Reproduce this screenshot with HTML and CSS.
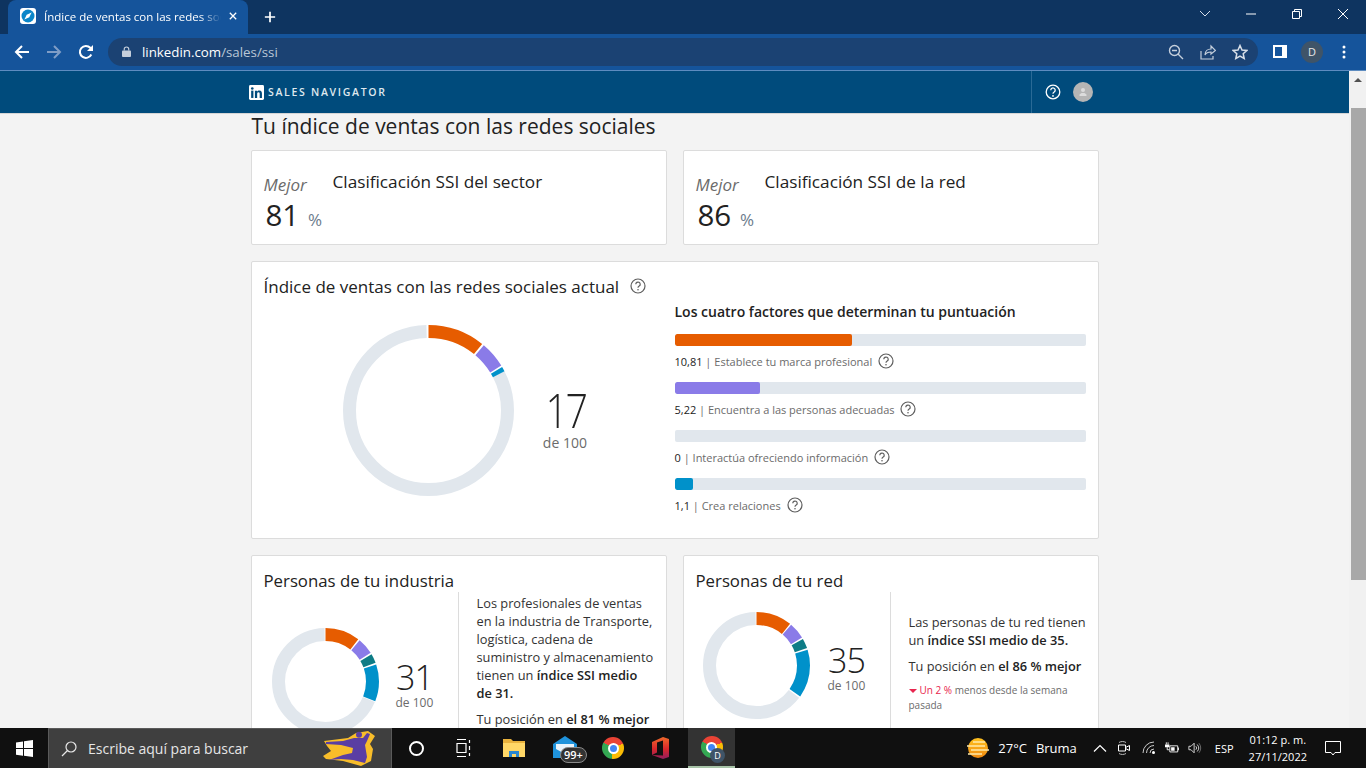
FILE: index.html
```html
<!DOCTYPE html>
<html lang="es">
<head>
    <meta charset="UTF-8">
    <meta name="viewport" content="width=device-width, initial-scale=1.0">
    <title>Índice de ventas con las redes sociales</title>
    <link rel="stylesheet" href="styles.css">
</head>
<body>
    <!-- Browser tabs -->
    <div class="tabstrip">
        <div class="tab">
            <svg class="favicon" viewBox="0 0 16 16">
                <rect width="16" height="16" rx="3" fill="#fff"/>
                <circle cx="8" cy="8" r="6.5" fill="#0a86c9"/>
                <path d="M11.6 4.4 9.3 9.3 4.4 11.6 6.7 6.7Z" fill="#fff"/>
            </svg>
            <span class="tab-title">Índice de ventas con las redes sociales</span>
            <svg class="tab-close" viewBox="0 0 10 10"><path d="M1 1l8 8M9 1l-8 8" stroke="#fff" stroke-width="1.6"/></svg>
        </div>
        <svg class="new-tab" viewBox="0 0 14 14"><path d="M7 1v12M1 7h12" stroke="#fff" stroke-width="2"/></svg>
        <div class="window-controls">
            <svg viewBox="0 0 46 14"><path d="M18 4l5 5 5-5" fill="none" stroke="#d5deea" stroke-width="1"/></svg>
            <svg viewBox="0 0 46 14"><path d="M18 7h10" stroke="#fff" stroke-width="1"/></svg>
            <svg viewBox="0 0 46 14"><path d="M18.500 4.500h7v7h-7zM20.500 4.500v-2h7v7h-2" fill="none" stroke="#fff" stroke-width="1"/></svg>
            <svg viewBox="0 0 46 14"><path d="M18 2l10 10M28 2l-10 10" stroke="#fff" stroke-width="1"/></svg>
        </div>
    </div>

    <!-- Address bar -->
    <div class="toolbar">
        <svg class="tool-icon" viewBox="0 0 16 16"><path d="M15 8H2M8 2 2 8l6 6" fill="none" stroke="#fff" stroke-width="2"/></svg>
        <svg class="tool-icon" viewBox="0 0 16 16"><path d="M1 8h13M8 2l6 6-6 6" fill="none" stroke="#7f9dc6" stroke-width="2"/></svg>
        <svg class="tool-icon" viewBox="0 0 16 16"><path d="M13.300 10.500A6 6 0 1 1 12.300 3.800L14 5.500" fill="none" stroke="#fff" stroke-width="2"/><path d="M15 1v6H9z" fill="#fff"/></svg>
        <div class="omnibox">
            <svg class="lock" viewBox="0 0 10 12"><path d="M2.500 5V3.500a2.500 2.500 0 0 1 5 0V5" fill="none" stroke="#c5cfdc" stroke-width="1.300"/><rect y="5" width="10" height="7" rx="1" fill="#c5cfdc"/></svg>
            <span class="url">linkedin.com<span class="url-path">/sales/ssi</span></span>
            <div class="omnibox-actions">
                <svg viewBox="0 0 16 16"><circle cx="6.500" cy="6.500" r="5" fill="none" stroke="#c5cfdc" stroke-width="1.400"/><path d="M4 6.500h5M10 10l5 5" stroke="#c5cfdc" stroke-width="1.400"/></svg>
                <svg viewBox="0 0 16 16"><path d="M1 7v8h12v-3M5 11c0-4 3-6 6-6V2l4.500 4.500L11 10V8c-3 0-5 1-6 3z" fill="none" stroke="#c5cfdc" stroke-width="1.200"/></svg>
                <svg viewBox="0 0 16 16"><path d="M8 1.500l2 4.500 4.800.5-3.600 3.200 1 4.800L8 12l-4.200 2.500 1-4.800L1.200 6.500 6 6z" fill="none" stroke="#d8dfe8" stroke-width="1.500"/></svg>
            </div>
        </div>
        <div class="profile-tools">
            <svg class="side-panel" viewBox="0 0 14 13"><path d="M0 0h14v13H0z" fill="#fff"/><path d="M2 2h7v9H2z" fill="#15549b"/></svg>
            <span class="profile-badge">D</span>
            <svg class="kebab" viewBox="0 0 4 14"><circle cx="2" cy="2" r="1.500" fill="#fff"/><circle cx="2" cy="7" r="1.500" fill="#fff"/><circle cx="2" cy="12" r="1.500" fill="#fff"/></svg>
        </div>
    </div>

    <!-- Page in the browser -->
    <div class="viewport">
        <div class="page">
            <header class="navbar">
                <svg class="li-logo" viewBox="0 0 16 16">
                    <rect width="16" height="16" rx="1.500" fill="#fff"/>
                    <rect x="2.300" y="6" width="2.400" height="7.800" fill="#004b7c"/>
                    <circle cx="3.500" cy="3.700" r="1.400" fill="#004b7c"/>
                    <path d="M6.300 6h2.300v1.100c.4-.7 1.200-1.300 2.400-1.300 2.300 0 2.800 1.500 2.800 3.500v4.500h-2.400v-4c0-1 0-2-1.300-2s-1.400 1-1.400 2v4H6.300z" fill="#004b7c"/>
                </svg>
                <span class="brand">SALES NAVIGATOR</span>
                <div class="navbar-right">
                    <svg class="nav-help" viewBox="0 0 16 16">
                        <circle cx="8" cy="8" r="6.800" fill="none" stroke="#fff" stroke-width="1.300"/>
                        <path d="M5.800 6.200a2.200 2.200 0 1 1 3.400 1.800c-.8.500-1.200 1-1.200 1.800" fill="none" stroke="#fff" stroke-width="1.300"/>
                        <circle cx="8" cy="11.900" r=".9" fill="#fff"/>
                    </svg>
                    <span class="nav-avatar">
                        <svg viewBox="0 0 10 10"><circle cx="5" cy="3" r="2" fill="#dcdcdc"/><path d="M1.500 9V7.500L3.500 6h3l2 1.500V9z" fill="#dcdcdc"/></svg>
                    </span>
                </div>
            </header>

            <main class="content">
                <h1 class="page-title">Tu índice de ventas con las redes sociales</h1>

                <div class="two-cols">
                    <section class="card rank-card">
                        <div class="rank-value">
                            <em>Mejor</em>
                            <div class="rank-number">81 <span>%</span></div>
                        </div>
                        <h2>Clasificación SSI del sector</h2>
                    </section>
                    <section class="card rank-card">
                        <div class="rank-value">
                            <em>Mejor</em>
                            <div class="rank-number">86 <span>%</span></div>
                        </div>
                        <h2>Clasificación SSI de la red</h2>
                    </section>
                </div>

                <section class="card score-card">
                    <div class="score-left">
                        <h2 class="card-title">Índice de ventas con las redes sociales actual
                            <svg class="help" viewBox="0 0 16 16"><use href="#q"/></svg>
                        </h2>
                        <div class="score-chart">
                            <svg class="donut-big" viewBox="0 0 171 171">
                                <g transform="rotate(-90 85.500 85.500)" fill="none" stroke-width="13">
                                    <circle cx="85.500" cy="85.500" r="79" pathLength="100" stroke="#e1e7ed" stroke-dasharray="82.300 100" stroke-dashoffset="-17.300"/>
                                    <circle cx="85.500" cy="85.500" r="79" pathLength="100" stroke="#e65c00" stroke-dasharray="10.800 100"/>
                                    <circle cx="85.500" cy="85.500" r="79" pathLength="100" stroke="#8a7be8" stroke-dasharray="5 100" stroke-dashoffset="-11.200"/>
                                    <circle cx="85.500" cy="85.500" r="79" pathLength="100" stroke="#0091ca" stroke-dasharray="0.900 100" stroke-dashoffset="-16.500"/>
                                </g>
                            </svg>
                            <div class="score big">
                                <strong>17</strong>
                                <span>de 100</span>
                            </div>
                        </div>
                    </div>
                    <div class="factors">
                        <h3>Los cuatro factores que determinan tu puntuación</h3>
                        <div class="factor">
                            <div class="bar"><div class="bar-fill orange" style="width: 43.1%"></div></div>
                            <p><b>10,81</b> | Establece tu marca profesional <svg class="help" viewBox="0 0 16 16"><use href="#q"/></svg></p>
                        </div>
                        <div class="factor">
                            <div class="bar"><div class="bar-fill purple" style="width: 20.7%"></div></div>
                            <p><b>5,22</b> | Encuentra a las personas adecuadas <svg class="help" viewBox="0 0 16 16"><use href="#q"/></svg></p>
                        </div>
                        <div class="factor">
                            <div class="bar"></div>
                            <p><b>0</b> | Interactúa ofreciendo información <svg class="help" viewBox="0 0 16 16"><use href="#q"/></svg></p>
                        </div>
                        <div class="factor">
                            <div class="bar"><div class="bar-fill blue" style="width: 4.4%"></div></div>
                            <p><b>1,1</b> | Crea relaciones <svg class="help" viewBox="0 0 16 16"><use href="#q"/></svg></p>
                        </div>
                    </div>
                </section>

                <div class="two-cols">
                    <section class="card peers-card">
                        <h2 class="card-title">Personas de tu industria</h2>
                        <div class="peers-body">
                            <div class="peers-chart industry">
                                <svg class="donut-small" viewBox="0 0 107 107">
                                    <g transform="rotate(-90 53.500 53.500)" fill="none" stroke-width="13">
                                        <circle cx="53.500" cy="53.500" r="47" pathLength="100" stroke="#e1e7ed" stroke-dasharray="68.400 100" stroke-dashoffset="-31.300"/>
                                        <circle cx="53.500" cy="53.500" r="47" pathLength="100" stroke="#e65c00" stroke-dasharray="10.500 100"/>
                                        <circle cx="53.500" cy="53.500" r="47" pathLength="100" stroke="#8a7be8" stroke-dasharray="5 100" stroke-dashoffset="-11"/>
                                        <circle cx="53.500" cy="53.500" r="47" pathLength="100" stroke="#0e7c86" stroke-dasharray="2.800 100" stroke-dashoffset="-16.500"/>
                                        <circle cx="53.500" cy="53.500" r="47" pathLength="100" stroke="#0091ca" stroke-dasharray="11.200 100" stroke-dashoffset="-19.800"/>
                                    </g>
                                </svg>
                                <div class="score">
                                    <strong>31</strong>
                                    <span>de 100</span>
                                </div>
                            </div>
                            <div class="peers-text">
                                <p>Los profesionales de ventas en la industria de Transporte, logística, cadena de suministro y almacenamiento tienen un <b>índice SSI medio de&nbsp;31.</b></p>
                                <p>Tu posición en <b>el 81 % mejor</b></p>
                            </div>
                        </div>
                    </section>
                    <section class="card peers-card">
                        <h2 class="card-title">Personas de tu red</h2>
                        <div class="peers-body">
                            <div class="peers-chart network">
                                <svg class="donut-small" viewBox="0 0 107 107">
                                    <g transform="rotate(-90 53.500 53.500)" fill="none" stroke-width="13">
                                        <circle cx="53.500" cy="53.500" r="47" pathLength="100" stroke="#e1e7ed" stroke-dasharray="64.400 100" stroke-dashoffset="-35.300"/>
                                        <circle cx="53.500" cy="53.500" r="47" pathLength="100" stroke="#e65c00" stroke-dasharray="10.800 100"/>
                                        <circle cx="53.500" cy="53.500" r="47" pathLength="100" stroke="#8a7be8" stroke-dasharray="5 100" stroke-dashoffset="-11.200"/>
                                        <circle cx="53.500" cy="53.500" r="47" pathLength="100" stroke="#0e7c86" stroke-dasharray="3 100" stroke-dashoffset="-16.700"/>
                                        <circle cx="53.500" cy="53.500" r="47" pathLength="100" stroke="#0091ca" stroke-dasharray="14.600 100" stroke-dashoffset="-20.200"/>
                                    </g>
                                </svg>
                                <div class="score">
                                    <strong>35</strong>
                                    <span>de 100</span>
                                </div>
                            </div>
                            <div class="peers-text network-text">
                                <p>Las personas de tu red tienen un <b>índice SSI medio de 35.</b></p>
                                <p>Tu posición en <b>el 86 % mejor</b></p>
                                <p class="trend"><i class="trend-arrow"></i><span>Un 2 %</span> menos desde la semana pasada</p>
                            </div>
                        </div>
                    </section>
                </div>
            </main>
        </div>

        <div class="scrollbar">
            <i class="scroll-up"></i>
            <div class="scroll-thumb"></div>
        </div>
    </div>

    <!-- Windows taskbar -->
    <footer class="taskbar">
        <div class="start">
            <svg viewBox="0 0 17 17"><path d="M0 2.400 7 1.400v6.700H0zM8 1.300 17 0v8.100H8zM0 9h7v6.700L0 14.700zM8 9h9v8L8 15.800z" fill="#fff"/></svg>
        </div>
        <div class="search">
            <svg class="search-icon" viewBox="0 0 16 16"><circle cx="10" cy="6" r="5" fill="none" stroke="#e8e8e8" stroke-width="1.200"/><path d="M6.500 9.500 1 15" stroke="#e8e8e8" stroke-width="1.200"/></svg>
            <span>Escribe aquí para buscar</span>
            <svg class="doodle" viewBox="0 0 52 35">
                <path d="M1 10 25 7 33 2 45 0 52 5 47 13 50 18 48 30 38 35 20 30 3 28 0 25 8 20 4 15Z" fill="#f8bd2a"/>
                <path d="M31 7 40 7 44 2 47 3 44 10 42 14 44 26 42 32 30 29 18 28 6 29 20 24 29 22 30 17 18 14 3 13 3 11 20 10Z" fill="#5a3ea3"/>
                <circle cx="36" cy="3.800" r="3" fill="#5a3ea3"/>
            </svg>
        </div>
        <div class="task-apps">
            <span class="app"><i class="cortana"></i></span>
            <span class="app">
                <svg class="task-view" viewBox="0 0 18 18"><path d="M3 .5h9M3 17.500h9M3 4.500h9v9H3zM15.500 1v3M15.500 7v4M15.500 14v3" fill="none" stroke="#fff" stroke-width="1.200"/></svg>
            </span>
            <span class="app">
                <svg class="folder" viewBox="0 0 22 20"><path d="M0 1h8l2 2h12v15H0z" fill="#e9b23d"/><path d="M0 5h22v14H0z" fill="#ffd767"/><path d="M6 19v-6h10v6z" fill="#2a87d0"/><path d="M9 19v-3h4v3z" fill="#ffd767"/></svg>
            </span>
            <span class="app mail">
                <svg viewBox="0 0 24 24"><path d="M0 8 12 0l12 8v14H0z" fill="#1f93dc"/><path d="M3 8h18v5l-9 5-9-5z" fill="#e8f4fc"/></svg>
                <b class="mail-badge">99+</b>
            </span>
            <span class="app"><i class="chrome"><i></i></i></span>
            <span class="app">
                <svg class="office" viewBox="0 0 17 22">
                    <defs>
                        <linearGradient id="officeFill" x1="0" y1="0" x2="0" y2="1">
                            <stop offset="0" stop-color="#f0692a"/>
                            <stop offset=".55" stop-color="#d8262c"/>
                            <stop offset="1" stop-color="#8f1d5e"/>
                        </linearGradient>
                    </defs>
                    <path d="M11 0 17 2V20L11 22 0 18V5Z" fill="url(#officeFill)"/>
                    <path d="M11 3.500 5 5.500V15.500L0 18 11 18.500Z" fill="#101010"/>
                </svg>
            </span>
            <span class="app active">
                <i class="chrome"><i></i></i>
                <b class="chrome-badge">D</b>
            </span>
        </div>
        <div class="tray">
            <svg class="sun" viewBox="0 0 24 20">
                <defs>
                    <linearGradient id="sunFill" x1="0" y1="0" x2="0" y2="1">
                        <stop offset="0" stop-color="#ffc11f"/>
                        <stop offset="1" stop-color="#f08a12"/>
                    </linearGradient>
                </defs>
                <circle cx="12" cy="10" r="10" fill="url(#sunFill)"/>
                <path d="M7 4h12M1 8h18M5 12h18M2 16h14" stroke="#ffe9a8" stroke-width="1.300"/>
            </svg>
            <span class="weather">27°C</span>
            <span class="weather weather-name">Bruma</span>
            <svg class="tray-icon caret" viewBox="0 0 14 16"><path d="M1 11.500 7 5.500l6 6" fill="none" stroke="#fff" stroke-width="1.200"/></svg>
            <svg class="tray-icon meet" viewBox="0 0 14 16"><path d="M1.500 5h7v6h-7zM8.500 7.500l4-2v5l-4-2" fill="none" stroke="#fff" stroke-width="1"/><path d="M2 2.500c2-1.300 5-1.300 7 0M2 13.500c2 1.300 5 1.300 7 0" fill="none" stroke="#bbb" stroke-width="1"/></svg>
            <svg class="tray-icon wifi" viewBox="0 0 14 16"><path d="M12 9a4 4 0 0 0-4 4M12 5.500a7.500 7.500 0 0 0-7.500 7.500M12 2A11 11 0 0 0 1 13" fill="none" stroke="#c9c9c9" stroke-width="1"/><circle cx="11.500" cy="12.500" r="1.500" fill="#fff"/></svg>
            <svg class="tray-icon power" viewBox="0 0 16 16"><path d="M5.500 5.500h9v7h-9z" fill="none" stroke="#fff" stroke-width="1"/><path d="M7 7h4v4H7zM15 7.500h1v3h-1zM0 4h5v3H0z" fill="#fff"/><path d="M1.500 1.500V4M3.500 1.500V4M2.500 7v3H5" fill="none" stroke="#fff" stroke-width="1"/></svg>
            <svg class="tray-icon volume" viewBox="0 0 16 16"><path d="M1 6h2.500l3.500-3.500v11L3.500 10H1z" fill="none" stroke="#e6e6e6" stroke-width="1"/><path d="M9 6a3 3 0 0 1 0 4M10.500 4a6 6 0 0 1 0 8" fill="none" stroke="#e6e6e6" stroke-width="1"/><path d="M12.500 2.500a8.500 8.500 0 0 1 0 11" fill="none" stroke="#777" stroke-width="1"/></svg>
            <span class="lang">ESP</span>
            <span class="clock">01:12 p. m.<br>27/11/2022</span>
            <svg class="notify" viewBox="0 0 16 15"><path d="M.5.500h15v11H10L8 14 6 11.500H.5z" fill="none" stroke="#fff" stroke-width="1"/></svg>
        </div>
    </footer>

    <!-- Shared question mark icon -->
    <svg class="defs" width="0" height="0">
        <symbol id="q" viewBox="0 0 16 16">
            <circle cx="8" cy="8" r="7" fill="none" stroke="#5e5e5e" stroke-width="1.200"/>
            <path d="M5.800 6.300a2.200 2.200 0 1 1 3.400 1.800c-.8.500-1.200 1-1.200 1.700" fill="none" stroke="#5e5e5e" stroke-width="1.200"/>
            <circle cx="8" cy="11.800" r=".8" fill="#5e5e5e"/>
        </symbol>
    </svg>
</body>
</html>
```

FILE: styles.css
```css
* {
    box-sizing: border-box;
}

html, body {
    height: 100%;
}

body {
    margin: 0;
    width: 1366px;
    height: 768px;
    overflow: hidden;
    display: flex;
    flex-direction: column;
    font-family: "Open Sans", "Noto Sans", Arial, sans-serif;
    color: #222;
    background: #f3f3f3;
}

h1, h2, h3, p {
    margin: 0;
    font-weight: 400;
}

.defs {
    position: absolute;
}

/* Browser tabs */
.tabstrip {
    flex: 0 0 34px;
    display: flex;
    align-items: flex-end;
    padding-left: 8px;
    background: #0e3460;
}

.tab {
    width: 240px;
    height: 34px;
    display: flex;
    align-items: center;
    padding: 0 11px 2px 12px;
    background: #15549b;
    border-radius: 8px 8px 0 0;
}

.favicon {
    width: 16px;
    height: 16px;
    flex: none;
}

.tab-title {
    flex: 1;
    margin-left: 8px;
    overflow: hidden;
    white-space: nowrap;
    font-size: 11.5px;
    color: #fff;
    -webkit-mask-image: linear-gradient(90deg, #000 88%, transparent);
    mask-image: linear-gradient(90deg, #000 88%, transparent);
}

.tab-close {
    width: 8px;
    height: 8px;
    margin-left: 8px;
    flex: none;
}

.new-tab {
    width: 12px;
    height: 12px;
    margin: 0 0 11px 16px;
}

.window-controls {
    margin-left: auto;
    display: flex;
    align-self: flex-start;
    padding-top: 7px;
}

.window-controls svg {
    width: 46px;
    height: 14px;
}

/* Address bar */
.toolbar {
    flex: 0 0 37px;
    display: flex;
    align-items: center;
    padding: 0 0 1px 14px;
    background: #15549b;
    border-bottom: 1px solid #5d8cc0;
}

.tool-icon {
    width: 16px;
    height: 16px;
    margin-right: 16px;
}

.omnibox {
    width: 1150px;
    height: 28px;
    margin-left: -2px;
    display: flex;
    align-items: center;
    padding-left: 14px;
    background: #1b4273;
    border-radius: 14px;
}

.lock {
    width: 9px;
    height: 11px;
}

.url {
    margin-left: 11px;
    font-size: 13.300px;
    color: #fff;
}

.url-path {
    color: #b9c6d6;
}

.omnibox-actions {
    margin-left: auto;
    display: flex;
    gap: 16px;
    padding-right: 10px;
}

.omnibox-actions svg {
    width: 16px;
    height: 16px;
}

.profile-tools {
    display: flex;
    align-items: center;
    margin-left: 15px;
}

.side-panel {
    width: 14px;
    height: 13px;
}

.profile-badge {
    width: 22px;
    height: 22px;
    margin-left: 14px;
    border-radius: 50%;
    background: #3f5468;
    color: #e8e8e8;
    font-size: 11px;
    line-height: 22px;
    text-align: center;
}

.kebab {
    width: 4px;
    height: 14px;
    margin-left: 19px;
}

/* Page in the browser */
.viewport {
    flex: 1;
    min-height: 0;
    display: flex;
}

.page {
    flex: 1;
    min-width: 0;
    overflow: hidden;
}

.navbar {
    height: 43px;
    display: flex;
    align-items: center;
    padding-left: 249px;
    background: #004b7c;
    border-bottom: 1px solid #d5d5d5;
}

.li-logo {
    width: 15px;
    height: 15px;
}

.brand {
    margin-left: 4px;
    font-size: 10.500px;
    font-weight: 600;
    letter-spacing: 1.700px;
    color: #dfe8ee;
}

.navbar-right {
    margin-left: auto;
    width: 318px;
    height: 100%;
    display: flex;
    align-items: center;
    padding-left: 13px;
    border-left: 1px solid #2a6a96;
}

.nav-help {
    width: 16px;
    height: 16px;
}

.nav-avatar {
    width: 20px;
    height: 20px;
    margin-left: 12px;
    display: flex;
    align-items: center;
    justify-content: center;
    border-radius: 50%;
    background: #b5b5b5;
}

.nav-avatar svg {
    width: 10px;
    height: 10px;
}

.content {
    width: 848px;
    margin: 0 auto;
}

.page-title {
    height: 36px;
    padding-left: 1px;
    font-size: 21px;
    line-height: 24px;
    color: #222;
}

.two-cols {
    display: grid;
    grid-template-columns: 416px 416px;
    gap: 16px;
}

.card {
    background: #fff;
    border: 1px solid #dcdcdc;
    border-radius: 2px;
}

/* Percentile cards */
.rank-card {
    height: 95px;
    display: flex;
    padding: 20px 12px 0;
}

.rank-value {
    width: 69px;
}

.rank-value em {
    display: block;
    margin-top: 3px;
    font-size: 17px;
    line-height: 22px;
    color: #6b6b6b;
}

.rank-number {
    margin: 2px 0 0 2px;
    font-size: 29.500px;
    line-height: 34px;
    color: #222;
}

.rank-number span {
    margin-left: 1px;
    font-size: 17px;
    color: #6b7b8c;
}

.rank-card h2 {
    font-size: 17.200px;
    line-height: 22px;
}

/* Current score */
.score-card {
    height: 278px;
    margin: 16px 0;
    display: flex;
    padding: 0 12px 0;
}

.score-left {
    width: 411px;
}

.card-title {
    font-size: 17px;
    line-height: 22px;
    padding-top: 14px;
    white-space: nowrap;
}

.card-title .help {
    margin-left: 6px;
    vertical-align: -1px;
}

.score-chart {
    display: flex;
    align-items: center;
    margin-top: 27px;
    padding-left: 79px;
}

.donut-big {
    width: 171px;
    height: 171px;
}

.donut-small {
    width: 107px;
    height: 107px;
    flex: none;
}

.score {
    display: flex;
    flex-direction: column;
    align-items: center;
    margin: 7px 0 0 18px;
    color: #6b6b6b;
    font-size: 12px;
    line-height: 16px;
}

.score strong {
    font-size: 34px;
    font-weight: 300;
    letter-spacing: -1px;
    line-height: 35px;
    color: #222;
}

.score.big {
    margin: 15px 0 0 27px;
    font-size: 14px;
}

.score.big strong {
    font-size: 48px;
    letter-spacing: -3px;
    line-height: 50px;
    transform: scaleX(.82);
}

.help {
    width: 16px;
    height: 16px;
    vertical-align: -3px;
}

.factors {
    flex: 1;
    padding-top: 40px;
}

.factors h3 {
    font-size: 14px;
    font-weight: 600;
    line-height: 20px;
    margin-bottom: 12px;
}

.factor {
    height: 48px;
}

.bar {
    height: 12px;
    background: #e1e7ed;
    border-radius: 2px;
    overflow: hidden;
}

.bar-fill {
    height: 100%;
    border-radius: 2px;
}

.orange {
    background: #e65c00;
}

.purple {
    background: #8a7be8;
}

.blue {
    background: #0091ca;
}

.factor p {
    margin-top: 6px;
    font-size: 11px;
    line-height: 20px;
    color: #6b6b6b;
    white-space: nowrap;
}

.factor b {
    font-weight: 500;
    color: #222;
}

.factor .help {
    margin-left: 3px;
}

/* People cards */
.peers-card {
    height: 400px;
    padding: 0 12px;
}

.peers-card .card-title {
    padding-top: 14px;
    font-size: 16.800px;
}

.peers-body {
    display: flex;
    margin: 0 -12px;
    align-items: flex-start;
}

.peers-chart {
    width: 207px;
    flex: none;
    display: flex;
    align-items: center;
    padding-left: 20px;
    border-right: 1px solid #dcdcdc;
}

.peers-chart.industry {
    height: 179px;
}

.peers-chart.network {
    height: 146px;
    padding-left: 19px;
}

.industry .score {
    margin-left: 17px;
}

.peers-text {
    flex: 1;
    padding: 2px 12px 0 18px;
    font-size: 12.800px;
    line-height: 18px;
    color: #333;
}

.peers-text p + p {
    margin-top: 8px;
}

.peers-text b {
    font-weight: 600;
    color: #222;
}

.network-text {
    padding: 21px 4px 0 18px;
}

.peers-text .trend {
    margin-top: 8px;
    font-size: 10px;
    line-height: 15px;
    color: #6b6b6b;
}

.trend span {
    color: #e8254e;
}

.trend-arrow {
    display: inline-block;
    margin: 0 3px 1px 0;
    border: 4px solid transparent;
    border-top-color: #e8254e;
    border-bottom: 0;
}

/* Scrollbar */
.scrollbar {
    width: 17px;
    position: relative;
    background: #f1f1f1;
}

.scroll-up {
    position: absolute;
    top: 7px;
    left: 5px;
    border: 4px solid transparent;
    border-bottom-color: #505050;
    border-top: 0;
}

.scroll-thumb {
    position: absolute;
    top: 37px;
    left: 2px;
    width: 15px;
    height: 472px;
    background: #a8a8a8;
}

/* Windows taskbar */
.taskbar {
    flex: 0 0 40px;
    display: flex;
    align-items: center;
    background: #101010;
    color: #fff;
}

.start {
    width: 48px;
    display: flex;
    justify-content: center;
    padding-left: 1px;
}

.start svg {
    width: 17px;
    height: 17px;
}

.search {
    width: 344px;
    height: 40px;
    display: flex;
    align-items: center;
    padding-left: 12px;
    background: #3f3f3f;
    border: 1px solid #5a5a5a;
    border-bottom: 0;
    font-size: 14px;
    color: #e6e6e6;
}

.search-icon {
    width: 16px;
    height: 16px;
    margin-right: 11px;
}

.doodle {
    width: 52px;
    height: 35px;
    margin-left: auto;
    margin-right: 16px;
}

.task-apps {
    display: grid;
    grid-template-columns: 48px 46px 56px 46px 50px 44px 47px;
    height: 40px;
}

.app {
    position: relative;
    display: flex;
    align-items: center;
    justify-content: center;
}

.app.active {
    margin-left: 6px;
    width: 47px;
    background: #333;
    border-bottom: 2px solid #a8c4a8;
}

.cortana {
    width: 15px;
    height: 15px;
    border: 2px solid #fff;
    border-radius: 50%;
}

.task-view {
    width: 18px;
    height: 18px;
}

.folder {
    width: 22px;
    height: 20px;
}

.mail svg {
    width: 24px;
    height: 24px;
}

.mail-badge {
    position: absolute;
    left: 18px;
    top: 19px;
    padding: 0 3px;
    border-radius: 8px;
    background: #333;
    border: 1px solid #8a8a8a;
    font-size: 11px;
    line-height: 14px;
    font-weight: 600;
}

.chrome {
    width: 22px;
    height: 22px;
    display: flex;
    align-items: center;
    justify-content: center;
    border-radius: 50%;
    background: conic-gradient(from -60deg, #ea4335 0 125deg, #fbbc05 125deg 245deg, #34a853 245deg 360deg);
}

.chrome i {
    box-sizing: content-box;
    width: 7px;
    height: 7px;
    border-radius: 50%;
    background: #4285f4;
    border: 2px solid #fff;
}

.chrome-badge {
    position: absolute;
    left: 22px;
    top: 20px;
    width: 15px;
    height: 15px;
    border-radius: 50%;
    background: #3f5468;
    font-size: 9px;
    font-weight: 400;
    line-height: 15px;
    text-align: center;
}

.office {
    width: 17px;
    height: 22px;
}

.tray {
    margin-left: auto;
    display: flex;
    align-items: center;
    padding-right: 25px;
    font-size: 13px;
}

.sun {
    width: 24px;
    height: 20px;
}

.weather {
    margin-left: 8px;
}

.weather-name {
    margin-left: 9px;
}

.tray-icon {
    width: 14px;
    height: 16px;
}

.caret {
    margin-left: 16px;
}

.meet {
    margin-left: 10px;
}

.wifi {
    margin-left: 11px;
}

.power,
.volume {
    margin-left: 9px;
}

.lang {
    margin-left: 13px;
    font-size: 11px;
}

.clock {
    margin-left: 15px;
    font-size: 11px;
    line-height: 17px;
    text-align: center;
}

.notify {
    width: 16px;
    height: 15px;
    margin-left: 18px;
}
```
